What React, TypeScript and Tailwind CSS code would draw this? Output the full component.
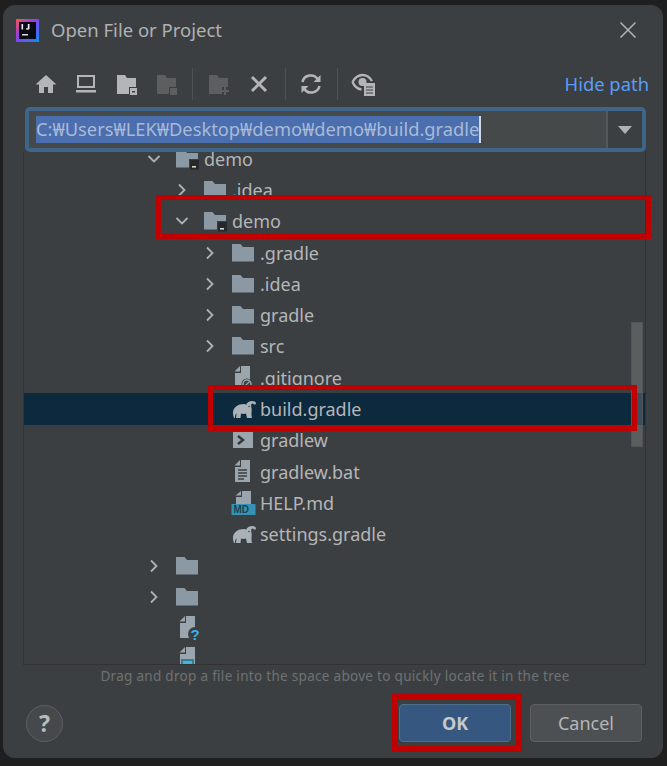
import React from "react";

const FONT = "font-['Noto_Sans','Open_Sans',sans-serif]";

function Chevron({ open }: { open?: boolean }) {
  return (
    <svg width="16" height="16" viewBox="0 0 16 16" fill="none" stroke="#afb1b3" strokeWidth="1.800">
      {open ? <path d="M2.500 5l5.500 5.500L13.500 5" /> : <path d="M5 2.500L10.500 8 5 13.500" />}
    </svg>
  );
}

function Folder({ module }: { module?: boolean }) {
  return (
    <svg width="26" height="24" viewBox="0 0 26 24">
      <path d="M1 3h8.500l2.500 3h11v14.500H1z" fill="#8a99a4" />
      {module && (
        <g>
          <rect x="14" y="12" width="11" height="11" fill="#3c3f41" />
          <rect x="15" y="13" width="9" height="9.500" fill="#26282a" />
          <rect x="17" y="19" width="4" height="1.600" fill="#d5d5d5" />
        </g>
      )}
    </svg>
  );
}

function Doc({ children }: { children?: React.ReactNode }) {
  return (
    <svg width="26" height="26" viewBox="0 0 26 26">
      <path d="M10 1h9v22H4V8h6z" fill="#9aa5ad" />
      <path d="M3.500 6.500L9 1v5.500z" fill="#9aa5ad" />
      {children}
    </svg>
  );
}

function Gradle() {
  return (
    <svg width="26" height="22" viewBox="0 0 26 22">
      <path
        d="M3 20C1.500 16 1.500 12 4 9.500 6 7 9.500 6 13 6c1 0 1.500.5 2 .7C16 4.500 18.500 3 21 3c2 0 3.800.7 4 2.300.1 1.400-2 1.700-2.600.6-.5-.8-1.400-.6-2 .3-.8 1.300.5 3.800.3 6.300-.2 2.500-.5 4.500.3 7.500h-5l-1-4.500c-1.500.5-3.500.5-5 0L9.500 20H5l.6-4.500C4.500 16 4 17.500 4 20z"
        fill="#a9b2b8"
      />
      <circle cx="18" cy="8.500" r="0.800" fill="#3c3f41" />
    </svg>
  );
}

function Row({
  pad,
  chevron,
  icon,
  label,
  selected,
}: {
  pad: string;
  chevron?: "open" | "closed";
  icon: React.ReactNode;
  label: string;
  selected?: boolean;
}) {
  return (
    <div className={`flex h-[31.300px] shrink-0 items-center ${pad} ${selected ? "bg-[#0d293e]" : ""}`}>
      <span className="flex w-[29px] shrink-0 items-center justify-start">
        {chevron && <Chevron open={chevron === "open"} />}
      </span>
      <span className="flex w-[29px] shrink-0 items-center">{icon}</span>
      <span className="text-[18px] leading-none whitespace-nowrap text-[#b4b6b8]">{label}</span>
    </div>
  );
}

function ToolIcon({ children, dim }: { children: React.ReactNode; dim?: boolean }) {
  return (
    <svg width="24" height="24" viewBox="0 0 24 24" fill={dim ? "#5c5e60" : "#b3b5b6"}>
      {children}
    </svg>
  );
}

function Sep() {
  return <div className="mx-[13.500px] h-[32px] w-px bg-[#4f5254]" />;
}

export default function App() {
  return (
    <div className={`h-[766px] w-[667px] bg-[#1f1f1f] pt-[5px] pr-[4px] pb-[8px] pl-[3px] ${FONT}`}>
      <div className="flex h-full flex-col rounded-[12px] bg-[#3c3f41]">
        <div className="flex h-[50px] shrink-0 items-center justify-between pr-[26px] pl-[13px]">
          <div className="flex items-center">
            <svg width="23" height="23" viewBox="0 0 23 23">
              <defs>
                <linearGradient id="lg" x1="0" y1="0" x2="1" y2="1">
                  <stop offset="0" stopColor="#fc4f4f" />
                  <stop offset="0.450" stopColor="#8a3ff0" />
                  <stop offset="1" stopColor="#0a8ef5" />
                </linearGradient>
              </defs>
              <rect width="23" height="23" fill="url(#lg)" />
              <rect x="3" y="3" width="17" height="17" fill="#0a0a14" />
              <rect x="6" y="15" width="6" height="1.500" fill="#ddd" />
              <path d="M5.500 5h1.600v5.500H5.500zM9.500 5h4v4.500c0 1.200-1 1.300-3.500 1.100V9.200h1.800V5z" fill="#eee" />
            </svg>
            <span className="ml-[12px] text-[18.500px] leading-none text-[#afb1b3]">Open File or Project</span>
          </div>
          <svg width="18" height="18" viewBox="0 0 18 18" stroke="#b0b2b3" strokeWidth="1.500">
            <path d="M1.500 1.500l15 15M16.500 1.500l-15 15" />
          </svg>
        </div>

        <div className="mt-[13px] flex h-[32px] shrink-0 items-center justify-between pr-[14px] pl-[31px]">
          <div className="flex items-center">
            <div className="flex items-center gap-[16.300px]">
              <ToolIcon><path d="M12 3L1.500 12.500H5V21h5v-6h4v6h5v-8.500h3.500z" /></ToolIcon>
              <ToolIcon><path d="M3 3h18v13H3zM5 5v9h14V5zM2 18h20v2.500H2z" fillRule="evenodd" /></ToolIcon>
              <ToolIcon><path d="M2 3h8l2 3h9v9h-7v7H2z" /><rect x="15" y="16" width="7" height="7" /><rect x="17" y="19" width="3" height="1.500" fill="#3c3f41" /></ToolIcon>
              <ToolIcon dim><path d="M2 3h8l2 3h9v9h-7v7H2z" /><rect x="15" y="16" width="7" height="7" /></ToolIcon>
            </div>
            <Sep />
            <div className="flex items-center gap-[16.300px]">
              <ToolIcon dim><path d="M2 3h8l2 3h9v9h-6v7H2z" /><path d="M17 15h2v3h3v2h-3v3h-2v-3h-3v-2h3z" /></ToolIcon>
              <svg width="24" height="24" viewBox="0 0 24 24" stroke="#b3b5b6" strokeWidth="3"><path d="M5 5l14 14M19 5L5 19" /></svg>
            </div>
            <Sep />
            <svg width="24" height="24" viewBox="0 0 24 24" fill="none" stroke="#b3b5b6" strokeWidth="2.600">
              <path d="M3.500 10A8.500 8.500 0 0 1 19 7.500" />
              <path d="M20.500 14A8.500 8.500 0 0 1 5 16.500" />
              <path d="M21.500 3v7h-7z" fill="#b3b5b6" stroke="none" />
              <path d="M2.500 21v-7h7z" fill="#b3b5b6" stroke="none" />
            </svg>
            <Sep />
            <svg width="26" height="26" viewBox="0 0 26 26" fill="none">
              <path d="M1.500 11C4 6.500 7.500 4 11.500 4S19 6.500 21 10" stroke="#b3b5b6" strokeWidth="2.400" />
              <path d="M1.500 11c2 4.500 5 7 9 7.500" stroke="#b3b5b6" strokeWidth="2.400" />
              <circle cx="11.500" cy="11" r="4" fill="#b3b5b6" />
              <rect x="13" y="12" width="11" height="13" fill="#b3b5b6" />
              <path d="M15 16h7M15 19h7M15 22h7" stroke="#3c3f41" strokeWidth="1.200" />
            </svg>
          </div>
          <span className="text-[18.400px] leading-none text-[#589df6]">Hide path</span>
        </div>

        <div className="mt-[7px] mr-[17px] ml-[22px] flex h-[45px] shrink-0 rounded-[5px] border-[4px] border-[#3f6589] bg-[#45494a]">
          <div className="flex min-w-0 flex-1 items-center pl-[7px]">
            <span className="flex h-[27px] w-[445px] items-center overflow-hidden border-r-2 border-[#cfd8e6] bg-[#4b6eaf] text-[18.300px] leading-none whitespace-nowrap text-[#a9bad6]">
              C:₩Users₩LEK₩Desktop₩demo₩demo₩build.gradle
            </span>
          </div>
          <div className="flex w-[36px] shrink-0 items-center justify-center border-l-2 border-[#56595b] bg-[#3c3f41]">
            <svg width="14" height="8" viewBox="0 0 14 8"><path d="M0 0h14L7 8z" fill="#afb1b3" /></svg>
          </div>
        </div>

        <div className="relative mr-[17px] ml-[20px] h-[513px] shrink-0 overflow-hidden border border-t-0 border-[#323232]">
          <div className="flex -translate-y-[9px] flex-col">
            <Row pad="pl-[122px]" chevron="open" icon={<Folder module />} label="demo" />
            <Row pad="pl-[150px]" chevron="closed" icon={<Folder />} label=".idea" />
            <Row pad="pl-[150px]" chevron="open" icon={<Folder module />} label="demo" />
            <Row pad="pl-[178px]" chevron="closed" icon={<Folder />} label=".gradle" />
            <Row pad="pl-[178px]" chevron="closed" icon={<Folder />} label=".idea" />
            <Row pad="pl-[178px]" chevron="closed" icon={<Folder />} label="gradle" />
            <Row pad="pl-[178px]" chevron="closed" icon={<Folder />} label="src" />
            <Row
              pad="pl-[178px]"
              icon={
                <Doc>
                  <circle cx="16" cy="19" r="5.500" fill="#3c3f41" />
                  <circle cx="16" cy="19" r="4" fill="none" stroke="#9aa5ad" strokeWidth="1.500" />
                  <path d="M13.500 21.500l5-5" stroke="#9aa5ad" strokeWidth="1.200" />
                </Doc>
              }
              label=".gitignore"
            />
            <Row pad="pl-[178px]" selected icon={<Gradle />} label="build.gradle" />
            <Row
              pad="pl-[178px]"
              icon={
                <svg width="24" height="24" viewBox="0 0 24 24">
                  <rect x="2" y="4" width="20" height="16" fill="#9aa5ad" />
                  <path d="M7 8l5 4-5 4" fill="none" stroke="#33373a" strokeWidth="2.400" />
                </svg>
              }
              label="gradlew"
            />
            <Row
              pad="pl-[178px]"
              icon={
                <Doc>
                  <path d="M7 11h9M7 14h9M7 17h9M7 20h6" stroke="#3c3f41" strokeWidth="1.300" />
                </Doc>
              }
              label="gradlew.bat"
            />
            <Row
              pad="pl-[178px]"
              icon={
                <svg width="26" height="26" viewBox="0 0 26 26">
                  <path d="M11 1h9v13H5V7h6z" fill="#9aa5ad" />
                  <path d="M4.500 5.500L10 1v4.500z" fill="#9aa5ad" />
                  <rect x="0.500" y="14" width="24" height="11" fill="#3592b5" />
                  <text x="2.500" y="23" fontSize="10" fontWeight="700" fill="#20424f" fontFamily="Liberation Sans, sans-serif">MD</text>
                </svg>
              }
              label="HELP.md"
            />
            <Row pad="pl-[178px]" icon={<Gradle />} label="settings.gradle" />
            <Row pad="pl-[122px]" chevron="closed" icon={<Folder />} label="" />
            <Row pad="pl-[122px]" chevron="closed" icon={<Folder />} label="" />
            <Row
              pad="pl-[122px]"
              icon={
                <span className="relative left-[1px]">
                  <Doc>
                    <circle cx="19" cy="19" r="7" fill="#3c3f41" />
                    <text x="14.500" y="25" fontSize="15" fontWeight="700" fill="#3cb1e6" fontFamily="Liberation Sans, sans-serif">?</text>
                  </Doc>
                </span>
              }
              label=""
            />
            <Row
              pad="pl-[122px]"
              icon={
                <span className="relative left-[1px]">
                  <Doc>
                    <rect x="5" y="13" width="13" height="11" fill="#2e7f9e" />
                    <rect x="7" y="15" width="9" height="6" fill="#4ab2d8" />
                  </Doc>
                </span>
              }
              label=""
            />
          </div>
          <div className="absolute top-[170px] right-[2px] h-[125px] w-[12px] border border-[#525456] bg-[#a7a7a7]/30" />
        </div>

        <div className="mt-[2px] shrink-0 pl-[4px] text-center text-[13.500px] leading-[18px] tracking-[0.3px] text-[#6f7274]">
          Drag and drop a file into the space above to quickly locate it in the tree
        </div>

        <div className="mt-[19px] flex shrink-0 items-center justify-between pr-[21px] pl-[23px]">
          <div className="flex h-[37px] w-[37px] items-center justify-center rounded-full border border-[#5e6060] bg-[#46494b] text-[23px] font-bold leading-none text-[#b9bbbc]">
            ?
          </div>
          <div className="flex gap-[19px]">
            <div className="flex h-[38px] w-[112px] items-center justify-center rounded-[4px] border border-[#4c708c] bg-[#365880] text-[18px] font-bold leading-none text-[#c6c8ca]">
              OK
            </div>
            <div className="flex h-[38px] w-[112px] items-center justify-center rounded-[4px] border border-[#5e6060] bg-[#4c5052] text-[18px] leading-none text-[#b4b6b8]">
              Cancel
            </div>
          </div>
        </div>
      </div>

      <div className="absolute top-[195px] left-[156px] h-[44px] w-[495px] border-[5px] border-[#c00000]" />
      <div className="absolute top-[385px] left-[208px] h-[46px] w-[429px] border-[5px] border-[#c00000]" />
      <div className="absolute top-[694px] left-[392px] h-[58px] w-[130px] border-[6px] border-[#c00000]" />
    </div>
  );
}
